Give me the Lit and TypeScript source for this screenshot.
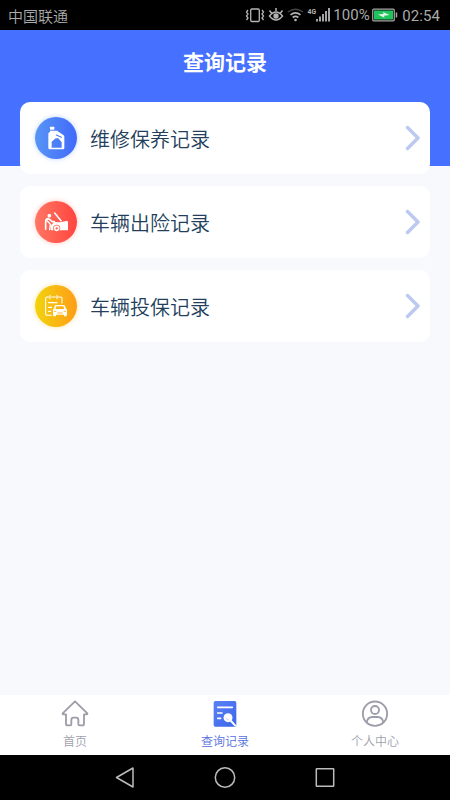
import { LitElement, html, css, svg } from "lit";
import { customElement, property } from "lit/decorators.js";
import { classMap } from "lit/directives/class-map.js";

const SANS = css`"Noto Sans CJK SC", sans-serif`;

const bottleIcon = svg`
  <rect x="75" y="65" width="13" height="9" rx="1.5" fill="#fff"/>
  <path fill="#fff" fill-rule="evenodd" d="M75 77H96L116 91Q118 93 118 96V129Q118 133 114 133H74Q70 133 70 129V86Q70 83 75 81ZM80 128H110V112L100 100H92L80 110Z"/>
  <path d="M94 90L109 97" stroke="#4a7cf8" stroke-width="3.5" stroke-linecap="round"/>`;

const repairIcon = svg`
  <circle cx="73" cy="77" r="5.5" fill="#fff"/>
  <path d="M62 118V96Q62 86 70 86L82 95H88" fill="none" stroke="#fff" stroke-width="5" stroke-linejoin="round" stroke-linecap="round"/>
  <path d="M67 93L76 103L74 119" fill="none" stroke="#fff" stroke-width="4" stroke-linecap="round"/>
  <path d="M89 69L108 92" stroke="#fff" stroke-width="4.5" stroke-linecap="round"/>
  <path fill="#fff" d="M76 107L88 96L105 97L127 92L129 96V121H78Z"/>
  <circle cx="95" cy="115" r="10.500" fill="#ff5c4c"/>
  <circle cx="95" cy="115" r="6" fill="none" stroke="#fff" stroke-width="5"/>`;

const insuranceIcon = svg`
  <path d="M79 121H66Q62 121 62 117V69Q62 66 66 66H71M80 66H91M100 66H107Q111 66 111 70V84" fill="none" stroke="#fff" stroke-width="3.2" stroke-linecap="round"/>
  <path d="M75 61V71M96 61V71M71 83H96M71 97H80M71 109H77" stroke="#fff" stroke-width="3.4" stroke-linecap="round"/>
  <path fill="#fff" fill-rule="evenodd" d="M92 90H116Q119 90 120 93L123 101L126 103V119H84V103L87 101L89 93Q90 90 92 90ZM94 94L91 102H118L115 94Z"/>
  <rect x="85" y="117" width="8" height="7" rx="2" fill="#fff"/>
  <rect x="117" y="117" width="8" height="7" rx="2" fill="#fff"/>
  <path d="M88 109H93M117 109H122M98 114H112" stroke="#fdb515" stroke-width="2.6" stroke-linecap="round"/>`;

@customElement("status-bar")
class StatusBar extends LitElement {
  static styles = css`
    :host { display: flex; height: 30px; box-sizing: border-box; align-items: center; padding: 1px 10px 0 8px; background: #000; color: #aaa; }
    .carrier { flex: 1; font: 350 15px/30px ${SANS}; }
    .icons { width: 88px; height: 30px; margin-top: -1px; }
    .text { font: 15px/30px Roboto, sans-serif; letter-spacing: 0.1px; white-space: nowrap; }
    .percent { width: 38px; margin-left: 1px; margin-top: -2px; }
    .battery { width: 27px; height: 30px; margin-right: 4px; margin-top: -1px; }
    .mini { font: bold 7.5px Roboto, sans-serif; }
  `;
  render() {
    return html`
      <span class="carrier">中国联通</span>
      <svg class="icons" viewBox="245 0 88 30" fill="none" stroke="#b5b5b5" stroke-width="1.3">
        <rect x="251.7" y="9" width="8.6" height="12.5" rx="1.2"/>
        <path d="M249 10l-1.5 2 1.5 2-1.5 2 1.5 2-1.5 2M263 10l1.5 2-1.5 2 1.5 2-1.5 2 1.5 2"/>
        <path d="M270.500 16q6.500-8 13 0q-6.500 8-13 0zM277 11V8M272.500 13l-2-2.500M281.500 13l2-2.500" stroke-width="1.500"/>
        <circle cx="277" cy="16" r="2" fill="#b5b5b5"/>
        <path d="M289 12q7.500-5.500 15 0" stroke="#444"/>
        <path d="M291.500 14.800q5-4 10 0M293.700 17.500q2.800-2.300 5.600 0" stroke-width="1.700"/>
        <circle cx="296.500" cy="20" r="1.300" fill="#b5b5b5" stroke="none"/>
        <text class="mini" x="308.500" y="14" textLength="8.500" lengthAdjust="spacingAndGlyphs" fill="#b5b5b5" stroke="none">4G</text>
        <path d="M318 19v2.500M321 16.500v5M324 14v7.500M327 11v10.500M330 8v13.500" stroke-width="1.800"/>
      </svg>
      <span class="text percent">100%</span>
      <svg class="battery" viewBox="372 0 27 30">
        <rect x="373.700" y="9.200" width="21.600" height="11.600" rx="1" fill="#08150d" stroke="#a5a5a5" stroke-width="1.200"/>
        <rect x="375" y="10.500" width="19" height="9" fill="#20c45c"/>
        <path d="M379 14.500l5.500-.5-.5-2 6.500 3-5.500.8.500 2z" fill="#e4f6e9"/>
        <rect x="396.700" y="12.500" width="1.500" height="5" fill="#aaa"/>
      </svg>
      <span class="text">02:54</span>`;
  }
}

@customElement("record-card")
class RecordCard extends LitElement {
  @property() label = "";
  @property() tone = "blue";
  @property({ attribute: false }) icon: unknown;
  @property() box = "30 36 126 126";
  static styles = css`
    :host { display: flex; align-items: center; height: 72px; box-sizing: border-box; padding: 0 10px 0 15px; border-radius: 10px; background: #fff; }
    .badge { display: block; width: 42px; height: 42px; border-radius: 50%; }
    .blue { background: linear-gradient(90deg, #5795f5, #4169fb); box-shadow: 0 0 5px #5b8ff566; }
    .red { background: linear-gradient(90deg, #ff7664, #ff453f); box-shadow: 0 0 5px #ff6b5a66; }
    .yellow { background: linear-gradient(90deg, #f2d40c, #ff9c18); box-shadow: 0 0 5px #ffc42a77; }
    .label { flex: 1; margin: 2px 0 0 13px; color: #233f5c; font: 350 20px/30px ${SANS}; }
    .arrow { width: 16px; height: 28px; }
  `;
  render() {
    return html`
      <svg class=${classMap({ badge: true, [this.tone]: true })} viewBox=${this.box}>${this.icon}</svg>
      <span class="label">${this.label}</span>
      <svg class="arrow" viewBox="0 0 16 28" fill="none" stroke="#bccaf0" stroke-width="3.500" stroke-linecap="round" stroke-linejoin="round">
        <path d="M3.500 3.500L14 14L3.500 24.500"/>
      </svg>`;
  }
}

@customElement("tab-bar")
class TabBar extends LitElement {
  static styles = css`
    :host { display: flex; height: 60px; background: #fff; }
    .tab { flex: 1; display: flex; flex-direction: column; align-items: center; color: #a0a1ab; font: 350 12px/18px ${SANS}; }
    .tab.active { color: #5470dc; }
    .glyph { width: 30px; height: 30px; margin: 4px 0 3px; }
  `;
  render() {
    return html`
      <div class="tab">
        <svg class="glyph" viewBox="60 27 90 90" fill="none" stroke="#9c9da8" stroke-width="5.500" stroke-linecap="round" stroke-linejoin="round">
          <path d="M105 34L68 70Q67 73 70 73H78V101Q78 106 83 106H91Q94 106 94 102V90Q94 83 101 83H108Q115 83 115 90V102Q115 106 119 106H127Q132 106 132 101V73H140Q143 73 142 70Z"/>
        </svg>
        <span>首页</span>
      </div>
      <div class="tab active">
        <svg class="glyph" viewBox="60 27 90 90" fill="none" stroke="#fff" stroke-linecap="round">
          <defs><linearGradient id="page" x2="1" y2="1"><stop stop-color="#5a82f5"/><stop offset="1" stop-color="#3c65ea"/></linearGradient></defs>
          <rect x="71" y="33" width="68" height="77" rx="5" fill="url(#page)" stroke="none"/>
          <path d="M83 52H127M83 69H96M83 85H92" stroke-width="5"/>
          <circle cx="114" cy="83" r="13.500" fill="#fff" stroke="none"/>
          <path d="M108 84Q109 90 115 90" stroke="#a9bdf7" stroke-width="2"/>
          <path d="M123 93L135 106" stroke-width="6"/>
        </svg>
        <span>查询记录</span>
      </div>
      <div class="tab">
        <svg class="glyph" viewBox="60 27 90 90" fill="none" stroke="#9c9da8" stroke-width="5.500">
          <circle cx="105" cy="71" r="36.500"/>
          <circle cx="105" cy="60" r="12"/>
          <path d="M80 97Q83 81 97 81H113Q127 81 130 97"/>
        </svg>
        <span>个人中心</span>
      </div>`;
  }
}

@customElement("app-root")
class AppRoot extends LitElement {
  static styles = css`
    :host { display: flex; flex-direction: column; height: 800px; overflow: hidden; background: #f7f8fc; }
    .main { flex: 1; background: linear-gradient(#4670ff 136px, #f7f9fc 136px); }
    .title { margin: 0; height: 72px; color: #fff; text-align: center; font: bold 21px/62px ${SANS}; }
    .list { display: flex; flex-direction: column; gap: 12px; padding: 0 20px; }
    .system { display: flex; height: 45px; background: #000; }
    .keys { width: 100%; height: 45px; }
  `;
  render() {
    return html`
      <status-bar></status-bar>
      <div class="main">
        <h1 class="title">查询记录</h1>
        <div class="list">
          <record-card label="维修保养记录" tone="blue" .icon=${bottleIcon}></record-card>
          <record-card label="车辆出险记录" tone="red" box="30 33 126 126" .icon=${repairIcon}></record-card>
          <record-card label="车辆投保记录" tone="yellow" box="30 30 126 126" .icon=${insuranceIcon}></record-card>
        </div>
      </div>
      <tab-bar></tab-bar>
      <div class="system">
        <svg class="keys" viewBox="0 0 450 45" fill="none" stroke="#bcbcbc" stroke-width="1.500" stroke-linejoin="round">
          <path d="M133 13V32L116.500 22.500Z"/>
          <circle cx="225" cy="22.500" r="9.700"/>
          <rect x="316.300" y="13.800" width="17.400" height="17.400" rx=".5"/>
        </svg>
      </div>`;
  }
}
